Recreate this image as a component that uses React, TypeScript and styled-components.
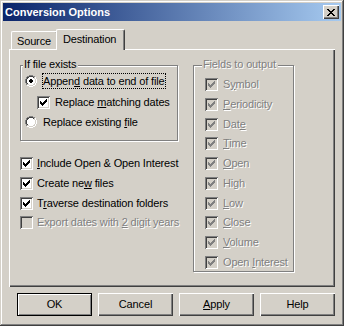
import React from "react";
import styled, { createGlobalStyle } from "styled-components";

const Global = createGlobalStyle`
  html, body { margin: 0; padding: 0; background: #d4d0c8; }
  body { font-family: "Liberation Sans", Arial, sans-serif; font-size: 11px; }
`;

const FACE = "#d4d0c8";

const Window = styled.div`
  width: 344px;
  height: 326px;
  box-sizing: border-box;
  background: ${FACE};
  padding: 3px;
  display: flex;
  flex-direction: column;
  box-shadow: inset -1px -1px 0 #404040, inset 1px 1px 0 ${FACE},
    inset -2px -2px 0 #808080, inset 2px 2px 0 #ffffff;
  font: 11px/13px "Liberation Sans", Arial, sans-serif;
  letter-spacing: -0.15px;
  color: #000;
`;

const TitleBar = styled.div`
  height: 18px;
  flex: none;
  display: flex;
  align-items: center;
  justify-content: space-between;
  padding: 0 2px;
  background: linear-gradient(to right, #0a246a, #a6caf0);
`;

const TitleText = styled.span`
  color: #fff;
  font-weight: bold;
  line-height: 13px;
  margin-top: 1px;
  letter-spacing: 0;
`;

const CloseBtn = styled.div`
  width: 16px;
  height: 14px;
  box-sizing: border-box;
  background: ${FACE};
  display: flex;
  align-items: center;
  justify-content: center;
  padding-right: 1px;
  box-shadow: inset 1px 1px 0 #fff, inset -1px -1px 0 #404040,
    inset -2px -2px 0 #808080;
`;

const Pix = styled.svg`
  display: block;
  flex: none;
`;

const Content = styled.div`
  padding: 8px 6px 0;
  display: flex;
  flex-direction: column;
`;

const TabRow = styled.div`
  height: 20px;
  display: flex;
  align-items: flex-end;
  padding-left: 2px;
`;

const Tab = styled.div<{ $active?: boolean }>`
  position: relative;
  z-index: ${(p) => (p.$active ? 2 : 1)};
  box-sizing: border-box;
  height: ${(p) => (p.$active ? 21 : 18)}px;
  margin: 0 ${(p) => (p.$active ? -2 : 0)}px ${(p) => (p.$active ? -1 : 0)}px
    ${(p) => (p.$active ? -2 : 0)}px;
  padding: ${(p) => (p.$active ? "3px 8px 0 6px" : "3px 6px 0 5px")};
  background: ${FACE};
  border-top: 1px solid #fff;
  border-left: 1px solid #fff;
  border-right: 1px solid #404040;
  border-radius: 2px 2px 0 0;
  box-shadow: inset -1px 0 0 #808080;
  line-height: 13px;
  white-space: nowrap;
`;

const Panel = styled.div`
  height: 238px;
  box-sizing: border-box;
  box-shadow: inset 1px 1px 0 #fff, inset -1px -1px 0 #404040,
    inset -2px -2px 0 #808080;
  padding: 16px 0 0 11px;
  display: flex;
  align-items: flex-start;
  gap: 15px;
`;

const LeftCol = styled.div`
  width: 158px;
  display: flex;
  flex-direction: column;
`;

const GroupBox = styled.div<{ $w: number; $h: number; $pt: number; $pl: number }>`
  position: relative;
  box-sizing: border-box;
  width: ${(p) => p.$w}px;
  height: ${(p) => p.$h}px;
  border: 1px solid #808080;
  box-shadow: 1px 1px 0 #fff, inset 1px 1px 0 #fff;
  padding: ${(p) => p.$pt}px 0 0 ${(p) => p.$pl}px;
  display: flex;
  flex-direction: column;
`;

const Legend = styled.span<{ $left: number; $disabled?: boolean }>`
  position: absolute;
  top: -8px;
  left: ${(p) => p.$left}px;
  padding: 0 2px 0 1px;
  background: ${FACE};
  line-height: 13px;
  white-space: nowrap;
  color: ${(p) => (p.$disabled ? "#808080" : "#000")};
  text-shadow: ${(p) => (p.$disabled ? "1px 1px 0 #fff" : "none")};
`;

const OptRow = styled.div<{ $h: number; $indent?: number }>`
  display: flex;
  align-items: center;
  height: ${(p) => p.$h}px;
  padding-left: ${(p) => p.$indent ?? 0}px;
  white-space: nowrap;
`;

const CheckList = styled.div<{ $mt?: number }>`
  display: flex;
  flex-direction: column;
  gap: 6.75px;
  margin-top: ${(p) => p.$mt ?? 0}px;
`;

const CheckRow = styled.div`
  display: flex;
  align-items: center;
  height: 13px;
  white-space: nowrap;
`;

const Box = styled.span<{ $disabled?: boolean }>`
  width: 13px;
  height: 13px;
  flex: none;
  box-sizing: border-box;
  padding: 3px;
  background: ${(p) => (p.$disabled ? FACE : "#fff")};
  box-shadow: inset 1px 1px 0 #808080, inset -1px -1px 0 #fff,
    inset 2px 2px 0 #404040, inset -2px -2px 0 ${FACE};
`;

const Label = styled.span<{ $disabled?: boolean; $gap: number }>`
  margin-left: ${(p) => p.$gap}px;
  line-height: 13px;
  color: ${(p) => (p.$disabled ? "#808080" : "#000")};
  text-shadow: ${(p) => (p.$disabled ? "1px 1px 0 #fff" : "none")};
`;

const RadioLabel = styled.span<{ $focus?: boolean }>`
  margin-left: 5px;
  padding: 0 1px 0 0;
  line-height: 14px;
  border: 1px dotted ${(p) => (p.$focus ? "#000" : "transparent")};
`;

const ButtonRow = styled.div`
  margin-top: 6px;
  display: flex;
  justify-content: flex-end;
  gap: 6px;
`;

const Btn = styled.button<{ $default?: boolean }>`
  width: 75px;
  height: 23px;
  box-sizing: border-box;
  margin: 0;
  padding: 0;
  border: none;
  background: ${FACE};
  font: 11px/13px "Liberation Sans", Arial, sans-serif;
  letter-spacing: -0.15px;
  color: #000;
  box-shadow: ${(p) =>
    p.$default
      ? "inset 0 0 0 1px #000, inset 2px 2px 0 #fff, inset -2px -2px 0 #808080"
      : "inset 1px 1px 0 #fff, inset -1px -1px 0 #404040, inset -2px -2px 0 #808080"};
`;

function Access({ text, u }: { text: string; u: number }) {
  if (u < 0) return <>{text}</>;
  return (
    <>
      {text.slice(0, u)}
      <u>{text[u]}</u>
      {text.slice(u + 1)}
    </>
  );
}

function CheckMark({ color }: { color: string }) {
  return (
    <Pix width="7" height="7" viewBox="0 0 7 7" shapeRendering="crispEdges">
      {[2, 3, 4, 3, 2, 1, 0].map((y, x) => (
        <rect key={x} x={x} y={y} width="1" height="3" fill={color} />
      ))}
    </Pix>
  );
}

function Check({
  text,
  u,
  checked,
  disabled,
  gap = 4,
}: {
  text: string;
  u: number;
  checked?: boolean;
  disabled?: boolean;
  gap?: number;
}) {
  return (
    <>
      <Box $disabled={disabled}>
        {checked && <CheckMark color={disabled ? "#808080" : "#000"} />}
      </Box>
      <Label $disabled={disabled} $gap={gap}>
        <Access text={text} u={u} />
      </Label>
    </>
  );
}

const radioPixels = (() => {
  const px: { x: number; y: number; c: string }[] = [];
  for (let y = 0; y < 12; y++)
    for (let x = 0; x < 12; x++) {
      const dx = x + 0.5 - 6;
      const dy = y + 0.5 - 6;
      const d = Math.sqrt(dx * dx + dy * dy);
      if (d >= 6) continue;
      const tl = x + y < 11;
      let c: string;
      if (d >= 5) c = tl ? "#808080" : "#ffffff";
      else if (d >= 4) c = tl ? "#404040" : FACE;
      else c = "#ffffff";
      px.push({ x, y, c });
    }
  return px;
})();

const dotPixels = [
  [5, 4], [6, 4],
  [4, 5], [5, 5], [6, 5], [7, 5],
  [4, 6], [5, 6], [6, 6], [7, 6],
  [5, 7], [6, 7],
];

function Radio({ on }: { on?: boolean }) {
  return (
    <Pix width="12" height="12" viewBox="0 0 12 12" shapeRendering="crispEdges">
      {radioPixels.map((p) => (
        <rect key={`${p.x}-${p.y}`} x={p.x} y={p.y} width="1" height="1" fill={p.c} />
      ))}
      {on &&
        dotPixels.map(([x, y]) => (
          <rect key={`d${x}-${y}`} x={x} y={y} width="1" height="1" fill="#000" />
        ))}
    </Pix>
  );
}

const closeRows = [
  [0, 1, 6, 7],
  [1, 2, 5, 6],
  [2, 3, 4, 5],
  [3, 4],
  [2, 3, 4, 5],
  [1, 2, 5, 6],
  [0, 1, 6, 7],
];

function CloseGlyph() {
  return (
    <Pix width="8" height="7" viewBox="0 0 8 7" shapeRendering="crispEdges">
      {closeRows.flatMap((xs, y) =>
        xs.map((x) => <rect key={`${x}-${y}`} x={x} y={y} width="1" height="1" fill="#000" />)
      )}
    </Pix>
  );
}

const leftChecks = [
  { text: "Include Open & Open Interest", u: 0, checked: true },
  { text: "Create new files", u: 9, checked: true },
  { text: "Traverse destination folders", u: 1, checked: true },
  { text: "Export dates with 2 digit years", u: 18, checked: false, disabled: true },
];

const fields = [
  { text: "Symbol", u: 1 },
  { text: "Periodicity", u: 0 },
  { text: "Date", u: 3 },
  { text: "Time", u: 0 },
  { text: "Open", u: 0 },
  { text: "High", u: -1 },
  { text: "Low", u: 0 },
  { text: "Close", u: 0 },
  { text: "Volume", u: 0 },
  { text: "Open Interest", u: 5 },
];

export default function App() {
  return (
    <>
      <Global />
      <Window>
        <TitleBar>
          <TitleText>Conversion Options</TitleText>
          <CloseBtn>
            <CloseGlyph />
          </CloseBtn>
        </TitleBar>
        <Content>
          <TabRow>
            <Tab>Source</Tab>
            <Tab $active>Destination</Tab>
          </TabRow>
          <Panel>
            <LeftCol>
              <GroupBox $w={158} $h={76} $pt={5} $pl={4}>
                <Legend $left={2}>If file exists</Legend>
                <OptRow $h={20}>
                  <Radio on />
                  <RadioLabel $focus>
                    <Access text="Append data to end of file" u={5} />
                  </RadioLabel>
                </OptRow>
                <OptRow $h={22} $indent={12}>
                  <Check text="Replace matching dates" u={8} checked gap={5} />
                </OptRow>
                <OptRow $h={18}>
                  <Radio />
                  <RadioLabel>
                    <Access text="Replace existing file" u={17} />
                  </RadioLabel>
                </OptRow>
              </GroupBox>
              <CheckList $mt={16}>
                {leftChecks.map((c) => (
                  <CheckRow key={c.text}>
                    <Check text={c.text} u={c.u} checked={c.checked} disabled={c.disabled} />
                  </CheckRow>
                ))}
              </CheckList>
            </LeftCol>
            <GroupBox $w={101} $h={207} $pt={12} $pl={11}>
              <Legend $left={8} $disabled>
                Fields to output
              </Legend>
              <CheckList>
                {fields.map((f) => (
                  <CheckRow key={f.text}>
                    <Check text={f.text} u={f.u} checked disabled gap={5} />
                  </CheckRow>
                ))}
              </CheckList>
            </GroupBox>
          </Panel>
          <ButtonRow>
            <Btn $default>OK</Btn>
            <Btn>Cancel</Btn>
            <Btn>
              <Access text="Apply" u={0} />
            </Btn>
            <Btn>Help</Btn>
          </ButtonRow>
        </Content>
      </Window>
    </>
  );
}
